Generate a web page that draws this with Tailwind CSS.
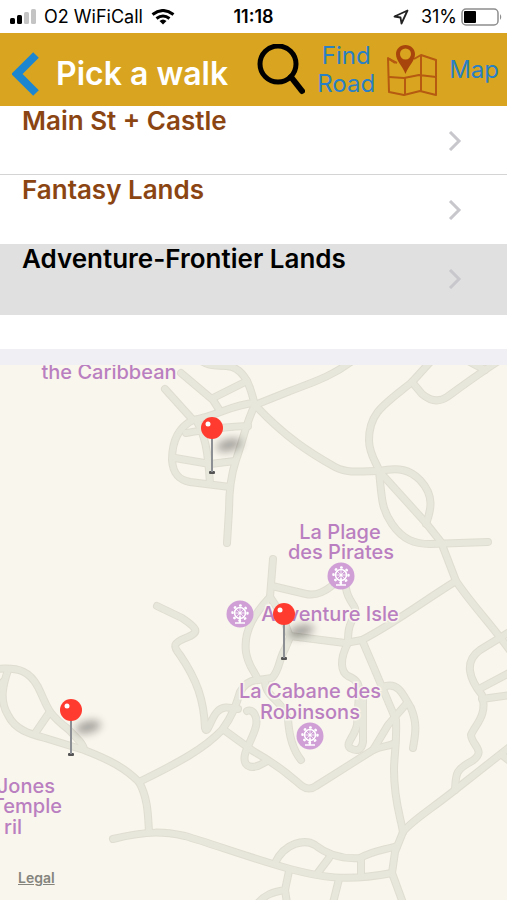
<!DOCTYPE html>
<html lang="en">
<head>
    <meta charset="UTF-8" />
    <meta name="viewport" content="width=device-width, initial-scale=1.0" />
    <title>Pick a walk</title>
    <script src="https://cdn.jsdelivr.net/npm/@tailwindcss/browser@4"></script>
</head>
<body class="min-h-screen flex flex-col bg-white font-['Inter',sans-serif] overflow-x-hidden">
    <!-- status bar -->
    <div class="h-[33px] shrink-0 grid grid-cols-[1fr_auto_1fr] items-center px-2 text-black">
        <div class="flex items-center gap-2">
            <svg class="w-7 h-4" viewBox="0 0 28 16">
                <rect x="2" y="9" width="5" height="6" rx="1.500" fill="#000" />
                <rect x="9" y="6" width="5" height="9" rx="1.500" fill="#000" />
                <rect x="16" y="3" width="5" height="12" rx="1.500" fill="#c4c4c4" />
                <rect x="23" y="0" width="5" height="15" rx="1.500" fill="#c4c4c4" />
            </svg>
            <span class="text-lg leading-6 whitespace-nowrap">O2 WiFiCall</span>
            <svg class="w-6 h-4" viewBox="0 0 24 16" fill="none" stroke="#000" stroke-width="3">
                <path d="M1.500 5.500 Q12 -2.500 22.500 5.500" />
                <path d="M5.500 9.500 Q12 4.500 18.500 9.500" />
                <path d="M8.500 12 Q12 9 15.500 12 L12 15.500Z" fill="#000" stroke="none" />
            </svg>
        </div>
        <span class="text-lg leading-6 font-semibold">11:18</span>
        <div class="flex items-center justify-end gap-2">
            <svg class="w-4 h-4 mr-1" viewBox="0 0 16 16" fill="none" stroke="#222" stroke-width="1.800" stroke-linejoin="round">
                <path d="M14.500 1.500 L1.500 7.500 L7.500 8.500 L8.500 14.500 Z" />
            </svg>
            <span class="text-lg leading-6">31%</span>
            <svg class="w-[42px] h-[18px] -mx-1" viewBox="0 0 42 18">
                <rect x="1" y="1" width="36" height="16" rx="4" fill="#fff" stroke="#8d8d8d" stroke-width="1.500" />
                <rect x="3" y="3" width="12" height="12" rx="1" fill="#000" />
                <path d="M39 6 Q41.500 9 39 12Z" fill="#8d8d8d" />
            </svg>
        </div>
    </div>

    <!-- header -->
    <header class="h-[73px] shrink-0 flex items-center bg-[#d9a520] pl-3 pr-2">
        <button class="shrink-0 mt-2" aria-label="Back">
            <svg class="w-7 h-11" viewBox="0 0 28 44" fill="none" stroke="#1c86d1" stroke-width="8">
                <path d="M24 3 L5 22 L24 41" />
            </svg>
        </button>
        <h1 class="text-[32px] leading-8 font-semibold text-white whitespace-nowrap ml-4 mt-2 grow">Pick a walk</h1>
        <button class="flex items-center gap-3 shrink-0 text-[#2a80c4] text-2xl leading-7">
            <svg class="w-[50px] h-[52px]" viewBox="0 0 50 52" fill="none" stroke="#000">
                <circle cx="23" cy="20" r="18" stroke-width="5" />
                <path d="M36 33 L47 47" stroke-width="6" stroke-linecap="round" />
            </svg>
            <span>Find<br />Road</span>
        </button>
        <button class="flex items-center gap-3 shrink-0 ml-3 text-[#2a80c4] text-2xl leading-7">
            <svg class="w-[50px] h-[52px]" viewBox="0 0 50 52" fill="none" stroke="#b55a10" stroke-width="2" stroke-linejoin="round">
                <path d="M8 19 L1 14 L2 48 L17 51 L33 47 L49 51 L49 16 L34 11 L27 15" />
                <path d="M34 11 V47 M2 33 L17 34 L32 31 L49 33 M18 34 V51 M2 15 L10 19" />
                <path fill="#a8450c" stroke="none" fill-rule="evenodd" d="M18.500 1 C13 1 9 5 9 10 C9 17 15 21 18.500 30 C22 21 28 17 28 10 C28 5 24 1 18.500 1Z M18.500 4.500 A5.500 5.500 0 1 1 18.500 15.500 A5.500 5.500 0 1 1 18.500 4.500Z" />
            </svg>
            <span>Map</span>
        </button>
    </header>

    <!-- walks -->
    <ul class="shrink-0 text-[26px] leading-7 font-semibold">
        <li>
            <a href="#" class="h-[69px] flex justify-between pt-px pl-[22px] pr-[45px] border-b border-[#d4d4d4] text-[#8b4513]">
                <span>Main St + Castle</span>
                <svg class="w-[14px] h-5 mt-6" viewBox="0 0 14 20" fill="none" stroke="#c7c7cc" stroke-width="3"><path d="M2 1 L11 10 L2 19" /></svg>
            </a>
        </li>
        <li>
            <a href="#" class="h-[69px] flex justify-between pt-px pl-[22px] pr-[45px] text-[#8b4513]">
                <span>Fantasy Lands</span>
                <svg class="w-[14px] h-5 mt-6" viewBox="0 0 14 20" fill="none" stroke="#c7c7cc" stroke-width="3"><path d="M2 1 L11 10 L2 19" /></svg>
            </a>
        </li>
        <li class="bg-[#e0e0e0]">
            <a href="#" class="h-[71px] flex justify-between pt-px pl-[22px] pr-[45px] text-black">
                <span>Adventure-Frontier Lands</span>
                <svg class="w-[14px] h-5 mt-6" viewBox="0 0 14 20" fill="none" stroke="#c7c7cc" stroke-width="3"><path d="M2 1 L11 10 L2 19" /></svg>
            </a>
        </li>
    </ul>
    <div class="h-[34px] shrink-0 bg-white"></div>
    <div class="h-4 shrink-0 bg-[#efeff4]"></div>

    <!-- map -->
    <main class="relative grow bg-[#f9f6ed]">
        <svg class="block w-full h-auto" viewBox="0 365 507 535" role="img" aria-label="Map of the walk">
            <defs>
                <g id="roads">
                    <path d="M203 362 C212 368 222 364 232 367 C246 372 251 388 255 406" />
                    <path d="M181 373 L213 400 L220 411" />
                    <path d="M165 389 L193 420" />
                    <path d="M213 398 L247 381" />
                    <path d="M193 420 C215 417 232 404 255 403" />
                    <path d="M193 420 C179 427 172 440 172 460 C173 475 180 480 190 482 L230 487" />
                    <path d="M186 433 C200 431 215 427 248 426" />
                    <path d="M175 458 L210 464 L235 461" />
                    <path d="M196 420 C205 435 208 450 210 484" />
                    <path d="M255 405 C247 420 243 440 236 460 C231 475 229 490 229 510 L227 543" />
                    <path d="M255 405 L290 391 C320 380 335 374 352 361" />
                    <path d="M255 405 C285 437 310 453 335 467 C348 474 365 471 379 471" />
                    <path d="M432 360 L412 382 C385 404 369 412 369 440 C369 455 378 465 379 471" />
                    <path d="M412 382 L422 394 Q435 405 447 397 C465 384 480 373 497 362" />
                    <path d="M470 362 L485 370" />
                    <path d="M379 471 C400 467 410 470 420 480 C435 496 431 510 426 524" />
                    <path d="M379 471 L426 523 L441 542 L456 581 C472 605 492 625 511 652" />
                    <path d="M379 471 C382 498 381 508 392 524 C403 540 415 544 430 544 L488 542" />
                    <path d="M157 606 L182 618 C197 628 200 632 188 637 C172 643 173 646 180 655 C197 680 204 700 205 728 C207 736 211 718 217 712 C222 706 228 707 238 709" />
                    <path d="M-3 669 C20 667 30 672 38 687 C48 707 46 712 68 729 C78 739 83 744 84 749" />
                    <path d="M8 670 C3 685 -1 700 8 715 C15 730 30 734 45 738 L84 750 C110 760 125 768 139 782" />
                    <path d="M-3 693 L3 682" />
                    <path d="M49 713 L36 732" />
                    <path d="M139 782 C148 798 148 815 149 832" />
                    <path d="M113 839 C150 830 165 832 185 836 C210 843 250 858 290 869 C320 877 345 882 392 873" />
                    <path d="M139 782 C180 762 205 748 222 730 C233 715 236 705 240 692 C245 683 252 680 258 680 L272 678 C280 670 279 658 285 649 L290 637" />
                    <path d="M224 730 L253 751 C280 766 290 776 302 786 Q309 791 316 786 L373 750 C384 745 388 747 395 743" />
                    <path d="M247 711 C253 708 258 717 256 726 C253 740 240 755 246 764 C252 771 262 764 267 761" />
                    <path d="M270 597 C256 612 243 630 246 652 C248 666 254 670 258 680" />
                    <path d="M273 559 L270 597 L282 615 L290 637" />
                    <path d="M272 586 L306 594 Q318 597 333 585" />
                    <path d="M346 588 C348 603 358 605 355 615 C349 625 348 630 348 642" />
                    <path d="M290 636 L345 643 L362 640 C395 623 425 600 456 581" />
                    <path d="M348 643 C339 660 341 672 348 676 C357 680 360 684 359 694 L357 725 C354 738 345 743 350 748 Q361 754 363 742 V692" />
                    <path d="M362 640 L374 668 L396 720 C397 745 394 755 394 770 C394 800 400 815 403 832" />
                    <path d="M386 686 C400 683 404 697 411 708 C418 725 415 735 413 748" />
                    <path d="M407 703 L388 725 L373 750" />
                    <path d="M265 682 C266 698 282 700 288 718 C289 738 293 750 301 760" />
                    <path d="M511 631 L480 650 C463 662 470 680 482 695 C488 715 475 725 471 735 C472 746 487 751 472 761 C455 770 456 774 455 790" />
                    <path d="M479 689 L511 672 M482 699 L511 695" />
                    <path d="M511 746 L455 790 C430 810 410 822 403 832 L395 852 L392 873 L403 903" />
                    <path d="M502 755 L511 762" />
                    <path d="M275 863 C285 842 305 839 315 845 C330 857 345 859 360 858 C375 850 385 850 397 846" />
                    <path d="M329 858 L317 874 M361 858 V877 M339 879 L333 903" />
                    <path d="M289 871 L285 890 L287 903 M285 890 C272 892 265 895 258 903" />
                </g>
                <g id="pin">
                    <ellipse cx="17" cy="-28" rx="13" ry="6" fill="#000" opacity="0.34" filter="url(#soft)" transform="rotate(-14 17 -28)" />
                    <rect x="-3" y="-2" width="6" height="3" rx="1" fill="#555" />
                    <path d="M0 -36 V-1" stroke="#8c9095" stroke-width="2" />
                    <circle cx="0" cy="-45" r="11" fill="#ff3b30" />
                    <circle cx="-4" cy="-49" r="2.500" fill="#fff" />
                </g>
                <g id="wheel">
                    <circle r="13.500" fill="#cf9fd6" />
                    <circle r="5.500" cy="-1" fill="none" stroke="#fff" stroke-width="1.500" />
                    <circle r="7.500" cy="-1" fill="none" stroke="#fff" stroke-width="2.500" stroke-linecap="round" stroke-dasharray="0.500 5.390" />
                    <path d="M-5 -1 H5 M0 -6 V9 M-4 -5 L4 3 M4 -5 L-4 3" stroke="#fff" stroke-width="0.700" />
                    <path d="M0 2 V9 M-5 9 H5" stroke="#fff" stroke-width="1.500" />
                    <circle r="1.500" cy="-1" fill="#fff" />
                </g>
                <filter id="soft" x="-50%" y="-100%" width="200%" height="300%"><feGaussianBlur stdDeviation="4" /></filter>
            </defs>
            <g fill="none" stroke-linecap="round" stroke-linejoin="round">
                <use href="#roads" stroke="#dfddd1" stroke-width="8" />
                <use href="#roads" stroke="#e8e7dc" stroke-width="6" />
            </g>
            <g class="text-xl font-medium" fill="#b97fc0" stroke="#f9f6ed" stroke-width="3" paint-order="stroke" text-anchor="middle">
                <text x="109" y="379">the Caribbean</text>
                <text x="340" y="539">La Plage</text>
                <text x="341" y="559">des Pirates</text>
                <text x="330" y="621">Adventure Isle</text>
                <text x="310" y="698">La Cabane des</text>
                <text x="310" y="719">Robinsons</text>
                <g text-anchor="end">
                    <text x="55" y="793">Jones</text>
                    <text x="62" y="813">Temple</text>
                    <text x="22" y="834">ril</text>
                </g>
            </g>
            <use href="#wheel" x="341" y="576" />
            <use href="#wheel" x="240" y="614" />
            <use href="#wheel" x="310" y="736" />
            <use href="#pin" x="212" y="473" />
            <use href="#pin" x="284" y="659" />
            <use href="#pin" x="71" y="755" />
        </svg>
        <a href="#" class="absolute left-[18px] bottom-3 text-sm leading-5 font-semibold text-[#85857e] underline">Legal</a>
    </main>
</body>
</html>
